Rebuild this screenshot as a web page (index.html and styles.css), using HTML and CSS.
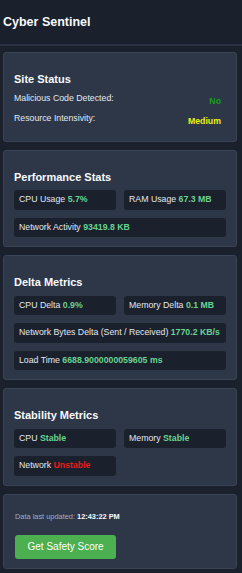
FILE: index.html
```html
<!DOCTYPE html>
<html lang="en">
<head>
<meta charset="utf-8">
<title>Cyber Sentinel</title>
<link rel="stylesheet" href="styles.css">
</head>
<body>
<header class="header"><h1 class="brand">Cyber Sentinel</h1></header>
<main class="main">
  <section class="card">
    <h2 class="card-title">Site Status</h2>
    <div class="status-row"><span>Malicious Code Detected:</span><span class="status-val ok">No</span></div>
    <div class="status-row"><span>Resource Intensivity:</span><span class="status-val warn">Medium</span></div>
  </section>
  <section class="card">
    <h2 class="card-title">Performance Stats</h2>
    <div class="grid">
      <div class="box">CPU Usage <b class="good">5.7%</b></div>
      <div class="box">RAM Usage <b class="good">67.3 MB</b></div>
      <div class="box wide">Network Activity <b class="good">93419.8 KB</b></div>
    </div>
  </section>
  <section class="card">
    <h2 class="card-title">Delta Metrics</h2>
    <div class="grid">
      <div class="box">CPU Delta <b class="good">0.9%</b></div>
      <div class="box">Memory Delta <b class="good">0.1 MB</b></div>
      <div class="box wide">Network Bytes Delta (Sent / Received) <b class="good">1770.2 KB/s</b></div>
      <div class="box wide">Load Time <b class="good">6688.9000000059605 ms</b></div>
    </div>
  </section>
  <section class="card">
    <h2 class="card-title">Stability Metrics</h2>
    <div class="grid">
      <div class="box">CPU <b class="good">Stable</b></div>
      <div class="box">Memory <b class="good">Stable</b></div>
      <div class="box">Network <b class="bad">Unstable</b></div>
    </div>
  </section>
  <section class="card footer-card">
    <p class="updated">Data last updated: <b>12:43:22 PM</b></p>
    <button class="score-btn">Get Safety Score</button>
  </section>
</main>
</body>
</html>
```

FILE: styles.css
```css
* { box-sizing: border-box; }
html, body {
  margin: 0;
  background: #1a202c;
  color: #e2e8f0;
  font-family: "Liberation Sans", Arial, sans-serif;
  font-size: 8.75px;
}
.header {
  height: 46px;
  padding: 15px 3px 0;
  border-bottom: 2px solid #2a3242;
}
.brand {
  margin: 0;
  font-size: 12.5px;
  line-height: 15px;
  font-weight: bold;
  color: #f7fafc;
}
.main {
  padding: 6px 5px 0 3px;
  display: flex;
  flex-direction: column;
  gap: 8px;
}
.card {
  background: #2d3748;
  border: 1px solid #3a4457;
  border-radius: 3px;
  padding: 10px 10px 9px;
}
.card-title {
  margin: 10px 0 6.5px;
  font-size: 11px;
  line-height: 13px;
  font-weight: bold;
  color: #f7fafc;
}
.status-row {
  display: flex;
  justify-content: space-between;
  align-items: flex-start;
  line-height: 10px;
  margin: 0 5px 7px 0;
}
.status-row:last-child { margin-bottom: 6px; }
.status-val {
  font-weight: bold;
  padding-top: 3px;
}
.ok { color: #1f9a22; }
.warn { color: #eeee10; }
.grid {
  display: grid;
  grid-template-columns: 1fr 1fr;
  gap: 8px;
}
.box {
  background: #1a202c;
  border-radius: 3px;
  padding: 5px 5px;
  line-height: 9.5px;
  white-space: nowrap;
}
.wide { grid-column: 1 / span 2; }
.good { color: #68d391; }
.bad { color: #e81c1c; }
.footer-card { padding-top: 17px; padding-bottom: 9px; }
.updated {
  margin: 0 0 14px 1px;
  font-size: 7.4px;
  line-height: 9px;
  color: #a0aec0;
}
.updated b { color: #f7fafc; }
.score-btn {
  display: block;
  margin-left: 1px;
  background: #4caf50;
  color: #fff;
  border: none;
  border-radius: 3px;
  font-family: "Liberation Sans", Arial, sans-serif;
  font-size: 10px;
  line-height: 12px;
  padding: 6px 12.5px;
  cursor: pointer;
}
```
